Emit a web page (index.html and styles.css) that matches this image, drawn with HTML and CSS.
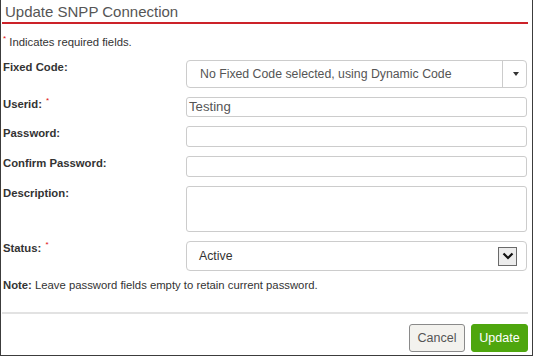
FILE: index.html
```html
<!DOCTYPE html>
<html>
<head>
<meta charset="utf-8">
<link rel="stylesheet" href="styles.css">
</head>
<body>
<div class="dialog">
  <div class="header"><h1 class="title">Update SNPP Connection</h1></div>
  <p class="req"><span class="star">*</span> Indicates required fields.</p>
  <div class="form">
    <div class="label">Fixed Code:</div>
    <div class="select select-fixed">
      <span class="select-text">No Fixed Code selected, using Dynamic Code</span>
      <span class="caret-zone"><span class="caret"></span></span>
    </div>

    <div class="label">Userid: <span class="star">*</span></div>
    <div class="input">Testing</div>

    <div class="label">Password:</div>
    <div class="input tall"></div>

    <div class="label">Confirm Password:</div>
    <div class="input tall"></div>

    <div class="label">Description:</div>
    <div class="input textarea"></div>

    <div class="label">Status: <span class="star">*</span></div>
    <div class="select select-status">
      <span class="select-text">Active</span>
      <span class="chev-box">
        <svg width="12" height="8" viewBox="0 0 12 8"><path d="M1.5 1.5 L6 6 L10.5 1.5" fill="none" stroke="#111" stroke-width="2.2"/></svg>
      </span>
    </div>
  </div>
  <p class="note"><b>Note:</b> Leave password fields empty to retain current password.</p>
  <div class="rule"></div>
  <div class="actions">
    <button class="btn btn-cancel">Cancel</button>
    <button class="btn btn-update">Update</button>
  </div>
</div>
</body>
</html>
```
FILE: styles.css
```css
html, body {
  margin: 0;
  padding: 0;
  background: #fff;
}
body {
  font-family: "Liberation Sans", Arial, sans-serif;
  color: #333;
}
.dialog {
  box-sizing: border-box;
  width: 533px;
  height: 356px;
  border-left: 1px solid #3c3c3c;
  border-right: 1px solid #3c3c3c;
  border-bottom: 1px solid #3c3c3c;
  display: flex;
  flex-direction: column;
}
.header {
  margin: 0 4px 0 1px;
  border-bottom: 2px solid #cc2229;
  height: 22px;
}
.title {
  margin: 0;
  padding: 2px 0 0 3px;
  font-size: 15px;
  line-height: 20px;
  font-weight: normal;
  color: #555;
}
.req {
  margin: 11px 0 0 2px;
  font-size: 11.3px;
  line-height: 14px;
  color: #333;
}
.star {
  color: #e01010;
  font-size: 8px;
  vertical-align: top;
  line-height: 8px;
}
.form {
  margin: 11px 0 0 2px;
  display: grid;
  grid-template-columns: 183px 341px;
  row-gap: 9px;
}
.label {
  font-size: 11.3px;
  line-height: 14px;
  font-weight: bold;
  color: #333;
}
.label .star {
  font-weight: normal;
  margin-left: 1px;
}
.select {
  box-sizing: border-box;
  border: 1px solid #ccc;
  border-radius: 4px;
  display: flex;
  align-items: center;
  font-size: 12.3px;
  color: #555;
}
.select-fixed {
  height: 28px;
}
.select-fixed .select-text {
  flex: 1;
  padding-left: 13px;
}
.caret-zone {
  box-sizing: border-box;
  width: 24px;
  height: 100%;
  border-left: 1px solid #ccc;
  display: flex;
  align-items: center;
  justify-content: center;
  padding-left: 3px;
}
.caret {
  width: 0;
  height: 0;
  border-left: 3.5px solid transparent;
  border-right: 3.5px solid transparent;
  border-top: 4px solid #333;
}
.select-status {
  height: 30px;
  color: #333;
}
.select-status .select-text {
  flex: 1;
  padding-left: 12px;
}
.chev-box {
  box-sizing: border-box;
  width: 19px;
  height: 19px;
  margin-right: 9px;
  border: 1px solid #6a6a6a;
  background: #ececec;
  display: flex;
  align-items: center;
  justify-content: center;
}
.input {
  box-sizing: border-box;
  height: 20px;
  border: 1px solid #ccc;
  border-radius: 3px;
  font-size: 13.2px;
  line-height: 18px;
  color: #555;
  padding-left: 2px;
}
.input.tall {
  height: 21px;
}
.input.textarea {
  height: 46px;
}
.note {
  margin: 7px 0 0 2px;
  font-size: 11.3px;
  line-height: 14px;
  color: #333;
}
.rule {
  margin: 20px 4px 0 1px;
  height: 2px;
  background: #e2e2e2;
}
.actions {
  margin: 10px 4px 0 0;
  display: flex;
  justify-content: flex-end;
  gap: 6px;
}
.btn {
  box-sizing: border-box;
  height: 28px;
  font-family: "Liberation Sans", Arial, sans-serif;
  font-size: 12.5px;
  border-radius: 3px;
  padding: 0;
}
.btn-cancel {
  width: 56px;
  background: #f3f2ee;
  border: 1px solid #8a8a8a;
  color: #555;
}
.btn-update {
  width: 57px;
  background: #4ea60e;
  border: 1px solid #4ea60e;
  color: #fff;
}
```
